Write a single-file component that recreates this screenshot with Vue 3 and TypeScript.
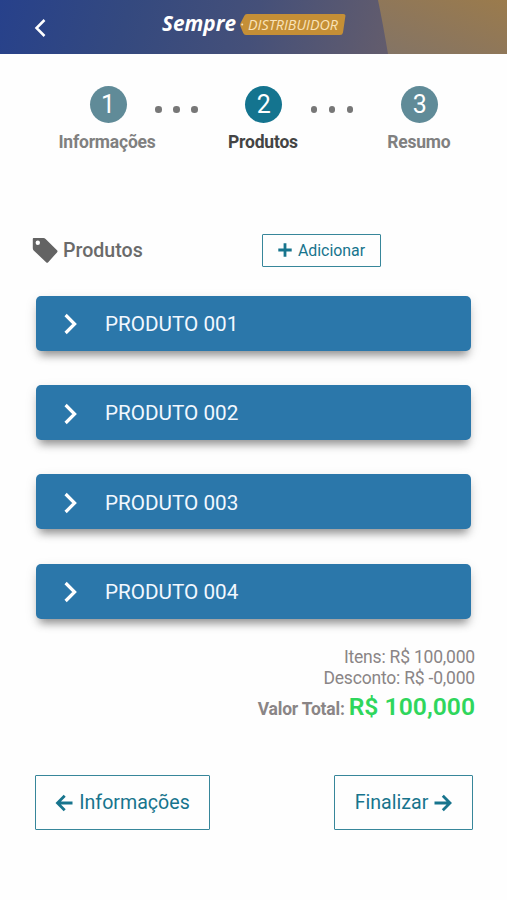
<script setup lang="ts">
interface Step {
  number: number
  label: string
}

const steps: Step[] = [
  { number: 1, label: 'Informações' },
  { number: 2, label: 'Produtos' },
  { number: 3, label: 'Resumo' },
]
const currentStep = 2

const products: string[] = ['PRODUTO 001', 'PRODUTO 002', 'PRODUTO 003', 'PRODUTO 004']
</script>

<template>
  <div class="screen">
    <header class="topbar">
      <svg class="topbar-shape" viewBox="0 0 131 54" preserveAspectRatio="none">
        <defs>
          <linearGradient id="gold" x1="0" y1="1" x2="1" y2="0">
            <stop offset="0" stop-color="#837466" />
            <stop offset="0.5" stop-color="#8f7759" />
            <stop offset="1" stop-color="#9b7b4c" />
          </linearGradient>
        </defs>
        <path d="M2 0H131V54H12Q7 24 2 0Z" fill="url(#gold)" />
      </svg>
      <button class="back" aria-label="Voltar">
        <svg width="12" height="20" viewBox="0 0 12 20">
          <path d="M10.500 2L2.500 10L10.500 18" fill="none" stroke="#fff" stroke-width="2.5" />
        </svg>
      </button>
      <svg class="logo" width="190" height="30" viewBox="0 0 190 30">
        <path d="M87 4H183.5Q185.700 4 185.400 6L183 22.500Q182.600 25 180 25H86Q84 25 83.200 23L80.300 16Q79.800 14.500 80.600 13L84.200 6Q85 4 87 4Z" fill="#c58f36" />
        <circle cx="82.200" cy="14.500" r="1" fill="#f5e3bd" />
        <text class="logo-name" x="2" y="20.500" textLength="74" lengthAdjust="spacingAndGlyphs">Sempre</text>
        <text class="logo-tag" x="88" y="20" textLength="90" lengthAdjust="spacingAndGlyphs">DISTRIBUIDOR</text>
      </svg>
    </header>

    <nav class="steps">
      <template v-for="(step, i) in steps" :key="step.number">
        <div v-if="i > 0" class="dots"><i></i><i></i><i></i></div>
        <div class="step" :class="{ active: step.number === currentStep }">
          <span class="circle">{{ step.number }}</span>
          <span class="step-label">{{ step.label }}</span>
        </div>
      </template>
    </nav>

    <section class="heading">
      <svg class="tag" width="26" height="27" viewBox="0 0 26 27">
        <path fill-rule="evenodd" d="M1.500 1H11.500Q12.700 1 13.600 1.900L25 13.200Q26.100 14.300 25 15.400L16.200 25.200Q15.200 26.300 14.100 25.200L1.700 13.500Q.8 12.600 .8 11.300V2Q.8 1 1.500 1ZM5.800 3.600A2.200 2.200 0 1 0 5.800 8A2.200 2.200 0 1 0 5.800 3.600Z" fill="#636363" />
      </svg>
      <h1>Produtos</h1>
      <button class="outline add">
        <svg width="14" height="14" viewBox="0 0 14 14">
          <path d="M7 .3V13.700M.3 7H13.700" stroke="currentColor" stroke-width="2.800" />
        </svg>
        <span>Adicionar</span>
      </button>
    </section>

    <ul class="products">
      <li v-for="product in products" :key="product">
        <svg width="14" height="22" viewBox="0 0 14 22">
          <path d="M2.600 2L11.600 11L2.600 20" fill="none" stroke="#fff" stroke-width="3.200" />
        </svg>
        <span>{{ product }}</span>
      </li>
    </ul>

    <section class="summary">
      <p class="items">Itens: R$ 100,000</p>
      <p class="discount">Desconto: R$ -0,000</p>
      <p class="total"><span>Valor Total:</span><strong>R$ 100,000</strong></p>
    </section>

    <footer class="actions">
      <button class="outline previous">
        <svg width="18" height="18" viewBox="0 0 18 18">
          <path d="M17.500 9H2.500M9.700 1.800L2.500 9L9.700 16.200" fill="none" stroke="currentColor" stroke-width="2.800" />
        </svg>
        <span>Informações</span>
      </button>
      <button class="outline next">
        <span>Finalizar</span>
        <svg width="18" height="18" viewBox="0 0 18 18">
          <path d="M.5 9H16M8.800 1.800L16 9L8.800 16.200" fill="none" stroke="currentColor" stroke-width="2.800" />
        </svg>
      </button>
    </footer>
  </div>
</template>

<style>
body {
  background: #fff;
}
</style>

<style scoped>
.screen {
  box-sizing: border-box;
  width: 507px;
  height: 900px;
  overflow: hidden;
  background: #fefefe;
  font-family: Roboto, sans-serif;
}

button {
  padding: 0;
  border: 0;
  background: none;
  font-family: inherit;
}

svg {
  display: block;
  flex: none;
}

.topbar {
  position: relative;
  display: flex;
  height: 54px;
  background: linear-gradient(105deg, #27418b 0%, #34497f 25%, #455079 50%, #625c6d 76%, #665e69 100%);
}

.topbar-shape {
  position: absolute;
  top: 0;
  right: 0;
  width: 131px;
  height: 54px;
}

.back {
  margin: 17.500px 0 0 34px;
  height: 20px;
}

.logo {
  margin: 10px 0 0 114px;
}

.logo-name {
  font: italic 700 21px 'Open Sans', sans-serif;
  fill: #fff;
}

.logo-tag {
  font: italic 400 14.500px 'Open Sans', sans-serif;
  fill: #fae3b8;
}

.steps {
  display: flex;
  padding: 32.400px 0 0 89.500px;
  height: 69.600px;
}

.step {
  display: flex;
  flex-direction: column;
  align-items: center;
  width: 37px;
  color: #808080;
}

.circle {
  width: 37px;
  height: 37px;
  border-radius: 50%;
  background: #608b98;
  color: #fff;
  font-size: 25px;
  line-height: 37px;
  text-align: center;
}

.step-label {
  margin: 9px 2px 0 0;
  font-size: 17.500px;
  font-weight: 700;
  letter-spacing: -0.200px;
  line-height: 20px;
  white-space: nowrap;
}

.active {
  color: #444;
}

.active .circle {
  background: #14748f;
}

.dots {
  display: flex;
  gap: 11.400px;
  width: 43px;
  margin: 19.700px 47.400px 0 28.500px;
}

.dots i {
  flex: none;
  width: 6.600px;
  height: 6.600px;
  border-radius: 50%;
  background: #777;
}

.heading {
  display: flex;
  align-items: center;
  height: 33px;
  padding: 78px 0 0 32px;
}

h1 {
  width: 199px;
  margin: 2px 0 0 5px;
  color: #6a6a6a;
  font-size: 19.600px;
  font-weight: 500;
  line-height: 24px;
}

.outline {
  display: flex;
  box-sizing: border-box;
  align-items: center;
  justify-content: center;
  border: 1.500px solid #37869a;
  border-radius: 1px;
  color: #17748d;
}

.add {
  gap: 6px;
  width: 119px;
  height: 33px;
  font-size: 15.900px;
}

.products {
  display: flex;
  flex-direction: column;
  gap: 34.200px;
  margin: 29px 35.600px 0 36.400px;
  padding: 0;
  list-style: none;
}

.products li {
  display: flex;
  align-items: center;
  gap: 27.600px;
  box-sizing: border-box;
  height: 55px;
  padding: 2px 0 0 27px;
  border-radius: 5px;
  background: #2b77aa;
  box-shadow: 0 8px 8px -4px rgba(0, 0, 0, 0.36), 0 4px 12px rgba(0, 0, 0, 0.13);
  color: #f2f8ff;
  font-size: 20.700px;
}

.products li span {
  margin-top: -0.500px;
}

.summary {
  padding: 28px 32px 0 0;
  color: #8a8586;
  text-align: right;
}

.summary p {
  margin: 0;
  font-size: 17.500px;
  letter-spacing: -0.200px;
  line-height: 21px;
}

.summary .total {
  display: flex;
  align-items: baseline;
  justify-content: flex-end;
  gap: 4px;
  height: 36px;
  line-height: 36px;
}

.total span {
  font-size: 17.500px;
  font-weight: 700;
}

.total strong {
  color: #2fd65c;
  font-size: 24.700px;
  font-weight: 600;
  letter-spacing: 0;
}

.actions {
  display: flex;
  justify-content: space-between;
  margin: 50px 34px 0 35px;
}

.actions .outline {
  height: 55px;
  gap: 6px;
  padding-top: 1px;
  font-size: 19.600px;
}

.previous {
  width: 175px;
}

.next {
  width: 139px;
}
</style>
